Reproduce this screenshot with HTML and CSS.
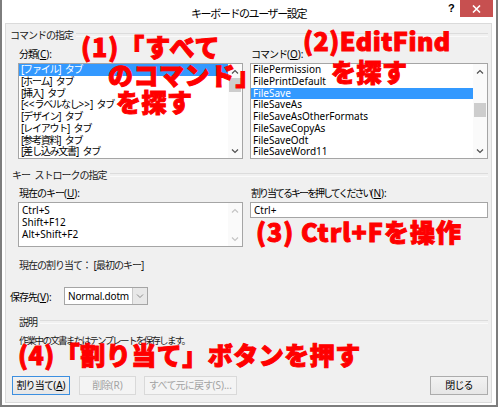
FILE: index.html
```html
<!DOCTYPE html>
<html lang="ja">
<head>
<meta charset="utf-8">
<title>キーボードのユーザー設定</title>
<link rel="stylesheet" href="styles.css">
</head>
<body>
<div class="window">
  <div class="titlebar">
    <span class="title">キーボードのユーザー設定</span>
    <span class="help">?</span>
    <span class="close"><svg width="9" height="8" viewBox="0 0 9 8"><path d="M1 0.5 L8 7.5 M8 0.5 L1 7.5" stroke="#fff" stroke-width="1.6"/></svg></span>
  </div>
  <div class="content">
    <div class="group-head"><span>コマンドの指定</span></div>
    <div class="cols cols-top">
      <div class="col">
        <div class="label">分類<span class="latin">(<u>C</u>):</span></div>
        <div class="listbox list-main">
          <ul class="items cat">
            <li class="sel">[ファイル] タブ</li>
            <li>[ホーム] タブ</li>
            <li>[挿入] タブ</li>
            <li>[<span class="latin">&lt;&lt;</span>ラベルなし<span class="latin">&gt;&gt;</span>] タブ</li>
            <li>[デザイン] タブ</li>
            <li>[レイアウト] タブ</li>
            <li>[参考資料] タブ</li>
            <li>[差し込み文書] タブ</li>
          </ul>
          <div class="scrollbar">
            <span class="arrow"><svg width="8" height="5" viewBox="0 0 8 5"><polyline points="1,4.5 4,1.5 7,4.5" fill="none" stroke="#505050" stroke-width="1.2"/></svg></span>
            <span class="track"><span class="thumb thumb-cat"></span></span>
            <span class="arrow"><svg width="8" height="5" viewBox="0 0 8 5"><polyline points="1,0.5 4,3.5 7,0.5" fill="none" stroke="#505050" stroke-width="1.2"/></svg></span>
          </div>
        </div>
      </div>
      <div class="col">
        <div class="label">コマンド<span class="latin">(<u>O</u>):</span></div>
        <div class="listbox list-main">
          <ul class="items latin">
            <li>FilePermission</li>
            <li>FilePrintDefault</li>
            <li class="sel">FileSave</li>
            <li>FileSaveAs</li>
            <li>FileSaveAsOtherFormats</li>
            <li>FileSaveCopyAs</li>
            <li>FileSaveOdt</li>
            <li>FileSaveWord11</li>
          </ul>
          <div class="scrollbar">
            <span class="arrow"><svg width="8" height="5" viewBox="0 0 8 5"><polyline points="1,4.5 4,1.5 7,4.5" fill="none" stroke="#505050" stroke-width="1.2"/></svg></span>
            <span class="track"><span class="thumb thumb-cmd"></span></span>
            <span class="arrow"><svg width="8" height="5" viewBox="0 0 8 5"><polyline points="1,0.5 4,3.5 7,0.5" fill="none" stroke="#505050" stroke-width="1.2"/></svg></span>
          </div>
        </div>
      </div>
    </div>

    <div class="group-head gh-keys"><span>キー ストロークの指定</span></div>
    <div class="cols cols-mid">
      <div class="col">
        <div class="label">現在のキー<span class="latin">(<u>U</u>):</span></div>
        <div class="listbox list-keys">
          <ul class="items keys latin">
            <li>Ctrl+S</li>
            <li>Shift+F12</li>
            <li>Alt+Shift+F2</li>
          </ul>
          <div class="scrollbar disabled">
            <span class="arrow"><svg width="8" height="5" viewBox="0 0 8 5"><polyline points="1,4.5 4,1.5 7,4.5" fill="none" stroke="#c4c4c4" stroke-width="1.2"/></svg></span>
            <span class="track"></span>
            <span class="arrow"><svg width="8" height="5" viewBox="0 0 8 5"><polyline points="1,0.5 4,3.5 7,0.5" fill="none" stroke="#c4c4c4" stroke-width="1.2"/></svg></span>
          </div>
        </div>
        <div class="assign">現在の割り当て： [最初のキー]</div>
      </div>
      <div class="col">
        <div class="label label-press">割り当てるキーを押してください<span class="latin">(<u>N</u>):</span></div>
        <div class="textbox latin">Ctrl+</div>
      </div>
    </div>

    <div class="save-row">
      <span class="save-label">保存先<span class="latin">(<u>V</u>):</span></span>
      <div class="dropdown">
        <span class="dd-value latin">Normal.dotm</span>
        <span class="dd-btn"><svg width="8" height="5" viewBox="0 0 8 5"><polyline points="1,0.5 4,3.5 7,0.5" fill="none" stroke="#8a8a8a" stroke-width="1"/></svg></span>
      </div>
    </div>

    <div class="group-head gh-desc"><span>説明</span></div>
    <div class="desc">作業中の文書またはテンプレートを保存します。</div>

    <div class="buttons">
      <div class="btn-group">
        <span class="btn focus">割り当て<span class="latin">(<u>A</u>)</span></span>
        <span class="btn disabled btn-del">削除<span class="latin">(R)</span></span>
        <span class="btn disabled btn-reset">すべて元に戻す<span class="latin">(S)...</span></span>
      </div>
      <span class="btn btn-close">閉じる</span>
    </div>
  </div>
</div>

<div class="note n1a">(1)「すべて</div>
<div class="note n1b">のコマンド」</div>
<div class="note n1c">を探す</div>
<div class="note n2a">(2)EditFind</div>
<div class="note n2b">を探す</div>
<div class="note n3">(3) Ctrl+Fを操作</div>
<div class="note n4">(4)「割り当て」ボタンを押す</div>
</body>
</html>
```
FILE: styles.css
```css
* { box-sizing: border-box; }
html, body { margin: 0; padding: 0; }
body {
  position: relative;
  width: 500px;
  height: 408px;
  overflow: hidden;
  background: #fff;
  font-family: "Noto Sans", "Noto Sans CJK JP", sans-serif;
  font-size: 10px;
  color: #000;
  letter-spacing: -1px;
  word-spacing: 3px;
}
u { text-decoration: underline; text-underline-offset: 1px; }
.latin { letter-spacing: 0; word-spacing: 0; }

.window {
  width: 498px;
  height: 407px;
  border: 2px solid #7d7d7d;
  border-top: none;
  padding: 0 4px 2px 3px;
  display: flex;
  flex-direction: column;
  background: #fff;
}

.titlebar {
  position: relative;
  height: 23px;
  flex: none;
  display: flex;
  justify-content: center;
  align-items: center;
  padding-top: 2px;
}
.title { font-size: 11px; color: #000; letter-spacing: -1.4px; }
.help {
  position: absolute;
  left: 443px;
  top: 2px;
  font-family: "Liberation Sans", sans-serif;
  font-weight: bold;
  font-size: 11px;
  letter-spacing: 0;
}
.close {
  position: absolute;
  right: -1px;
  top: 0;
  width: 33px;
  height: 17px;
  background: #c75050;
  display: flex;
  align-items: center;
  justify-content: center;
}

.content {
  flex: 1;
  background: #f0f0f0;
  border: 1px solid #dadada;
  padding: 4px 3px 0 0;
  display: flex;
  flex-direction: column;
}

.group-head {
  display: flex;
  align-items: center;
  height: 14px;
  line-height: 14px;
  padding-left: 4px;
  color: #1a1a1a;
  white-space: nowrap;
}
.group-head::after {
  content: "";
  flex: 1;
  height: 2px;
  border-top: 1px solid #dcdcdc;
  border-bottom: 1px solid #fafafa;
  margin-left: 3px;
}
.gh-keys { margin-top: 9px; padding-left: 6px; }
.gh-desc { margin-top: 10px; padding-left: 13px; }

.cols {
  display: grid;
  grid-template-columns: 225px 238px;
  column-gap: 7px;
  margin-left: 12px;
}
.cols-top { margin-top: 5px; }
.cols-mid { margin-top: 4px; }

.label {
  height: 14px;
  line-height: 14px;
  padding-left: 1px;
  margin-bottom: 2px;
  white-space: nowrap;
}
.label-press { letter-spacing: -2px; }

.listbox {
  display: flex;
  background: #fff;
  border: 1px solid #a5a5a5;
}
.list-main { height: 96px; }
.list-keys { height: 45px; }

.items {
  list-style: none;
  margin: 0;
  padding: 0;
  flex: 1;
  min-width: 0;
}
.items li {
  height: 11.75px;
  line-height: 11.75px;
  padding-left: 2px;
  white-space: nowrap;
}
.cat { letter-spacing: -1.2px; }
.items li.sel { background: #3399ff; color: #fff; }
.keys { padding-top: 1px; }
.keys li { height: 12px; line-height: 12px; padding-left: 3px; }

.scrollbar {
  width: 14px;
  flex: none;
  display: flex;
  flex-direction: column;
  background: #fafafa;
}
.arrow {
  height: 14px;
  flex: none;
  display: flex;
  align-items: center;
  justify-content: center;
}
.track { flex: 1; position: relative; }
.thumb {
  position: absolute;
  left: 1px;
  right: 1px;
  background: #cdcdcd;
}
.thumb-cat { top: 0; height: 14px; }
.thumb-cmd { top: 25px; height: 14px; }

.assign {
  margin-top: 11px;
  height: 14px;
  line-height: 14px;
  padding-left: 1px;
  color: #1a1a1a;
  word-spacing: 1px;
}

.textbox {
  height: 16px;
  line-height: 14px;
  background: #fff;
  border: 1px solid #a5a5a5;
  padding-left: 3px;
}

.save-row {
  margin-top: 15px;
  height: 18px;
  display: flex;
  align-items: center;
  padding-left: 4px;
}
.save-label { width: 54px; flex: none; }
.dropdown {
  width: 84px;
  height: 18px;
  display: flex;
  background: #fff;
  border: 1px solid #a5a5a5;
}
.dd-value { flex: 1; line-height: 16px; padding-left: 3px; letter-spacing: -0.2px; }
.dd-btn {
  width: 15px;
  background: #e8e8e8;
  border-left: 1px solid #c8c8c8;
  display: flex;
  align-items: center;
  justify-content: center;
}

.desc {
  margin-top: 5px;
  height: 14px;
  line-height: 14px;
  padding-left: 13px;
  color: #1a1a1a;
  font-size: 9.5px;
  letter-spacing: -1.7px;
}

.buttons {
  margin-top: 28px;
  display: flex;
  justify-content: space-between;
  padding-left: 6px;
}
.btn-group { display: flex; gap: 9px; }
.btn {
  height: 19px;
  line-height: 17px;
  width: 58px;
  text-align: center;
  border: 1px solid #acacac;
  background: linear-gradient(#f2f2f2, #e6e6e6);
  white-space: nowrap;
  letter-spacing: -0.8px;
}
.btn.focus { border-color: #3c8fe0; }
.btn.disabled { border-color: #d9d9d9; background: #f4f4f4; color: #a3a3a3; }
.btn-del { width: 57px; }
.btn-reset { width: 93px; margin-left: -1px; }
.btn-close { width: 58px; }

.note {
  position: absolute;
  font-family: "Noto Sans CJK JP", sans-serif;
  font-weight: 900;
  font-size: 25px;
  line-height: 25px;
  color: #ff0000;
  white-space: nowrap;
  -webkit-text-stroke: 1px #ff0000;
  letter-spacing: 0.5px;
  word-spacing: 0;
}
.n1a { left: 81px; top: 34px; letter-spacing: 1px; }
.n1b { left: 108px; top: 62px; }
.n1c { left: 116px; top: 89px; }
.n2a { left: 303px; top: 28px; }
.n2b { left: 331px; top: 59px; }
.n3 { left: 256px; top: 219px; letter-spacing: 1px; }
.n4 { left: 18px; top: 342px; }
```
